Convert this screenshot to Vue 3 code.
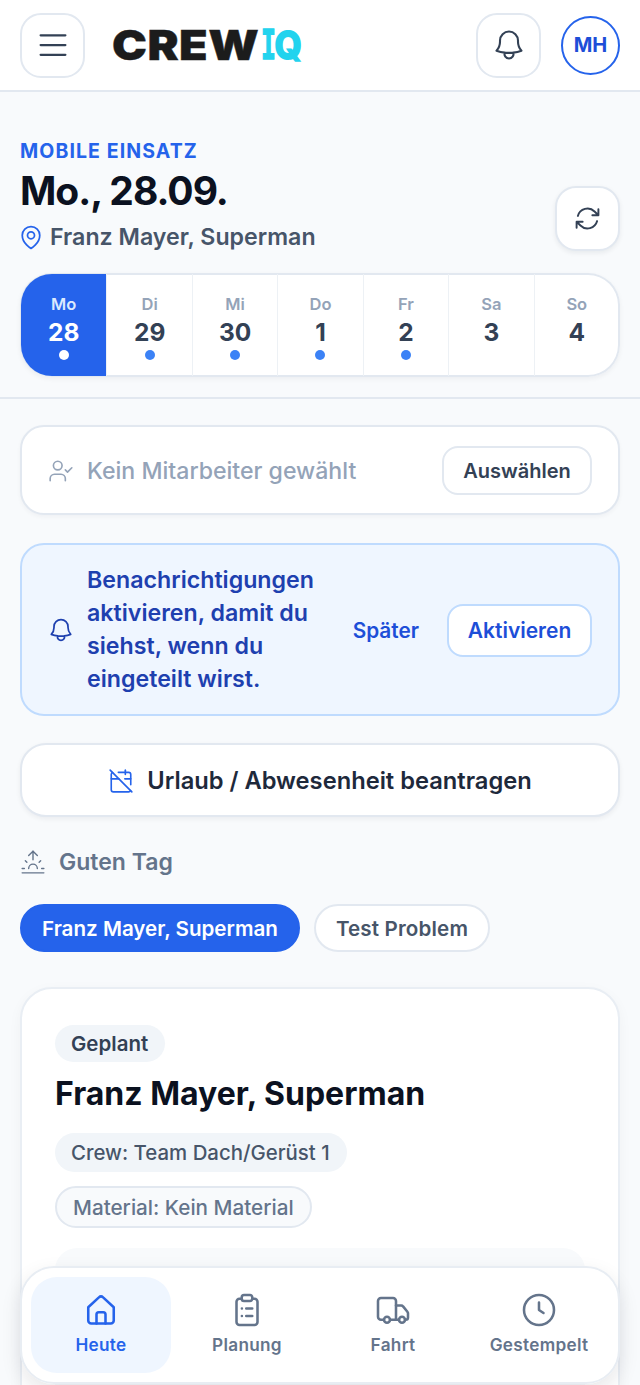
<template>
  <div class="page">
    <header class="topbar">
      <button class="icon-btn">
        <svg class="ico-menu" viewBox="0 0 24 24"><path d="M3.75 5.5h16.5M3.75 12h16.5M3.75 18.5h16.5" /></svg>
      </button>
      <div class="logo"><span class="logo-crew">CREW</span><span class="logo-i">I</span><span class="logo-q">Q</span></div>
      <button class="icon-btn bell-btn">
        <svg class="ico-lg" viewBox="0 0 24 24"><path d="M14.857 17.082a23.848 23.848 0 0 0 5.454-1.31A8.967 8.967 0 0 1 18 9.75V9A6 6 0 0 0 6 9v.75a8.967 8.967 0 0 1-2.312 6.022c1.733.64 3.56 1.085 5.455 1.31m5.714 0a24.255 24.255 0 0 1-5.714 0m5.714 0a3 3 0 1 1-5.714 0" /></svg>
      </button>
      <div class="avatar">MH</div>
    </header>

    <section class="hero">
      <div class="hero-head">
        <div>
          <div class="eyebrow">MOBILE EINSATZ</div>
          <h1 class="date">Mo., 28.09.</h1>
          <div class="place">
            <svg class="ico-pin" viewBox="0 0 24 24"><path d="M15 10.5a3 3 0 1 1-6 0 3 3 0 0 1 6 0Z" /><path d="M19.5 10.5c0 7.142-7.5 11.25-7.5 11.25S4.5 17.642 4.5 10.5a7.5 7.5 0 1 1 15 0Z" /></svg>
            Franz Mayer, Superman
          </div>
        </div>
        <button class="icon-btn refresh">
          <svg class="ico-md" viewBox="0 0 24 24"><path d="M16.023 9.348h4.992M2.985 19.644v-4.992m0 0h4.992m-4.993 0 3.181 3.183a8.25 8.25 0 0 0 13.803-3.7M4.031 9.865a8.25 8.25 0 0 1 13.803-3.7l3.181 3.182m0-4.991v4.99" /></svg>
        </button>
      </div>
      <div class="week">
        <div v-for="d in days" :key="d.label" class="day" :class="{ active: d.active }">
          <span class="day-label">{{ d.label }}</span>
          <span class="day-num">{{ d.num }}</span>
          <span class="dot" :class="{ hidden: !d.dot }"></span>
        </div>
      </div>
    </section>

    <main class="content">
      <div class="employee">
        <svg class="ico-user" viewBox="0 0 24 24"><path d="M16 21v-2a4 4 0 0 0-4-4H6a4 4 0 0 0-4 4v2" /><circle cx="9" cy="7" r="4" /><path d="m16 11 2 2 4-4" /></svg>
        <span class="employee-text">Kein Mitarbeiter gewählt</span>
        <button class="pick">Auswählen</button>
      </div>

      <div class="notice">
        <svg class="ico-notice" viewBox="0 0 24 24"><path d="M14.857 17.082a23.848 23.848 0 0 0 5.454-1.31A8.967 8.967 0 0 1 18 9.75V9A6 6 0 0 0 6 9v.75a8.967 8.967 0 0 1-2.312 6.022c1.733.64 3.56 1.085 5.455 1.31m5.714 0a24.255 24.255 0 0 1-5.714 0m5.714 0a3 3 0 1 1-5.714 0" /></svg>
        <p class="notice-text">Benachrichtigungen aktivieren, damit du siehst, wenn du eingeteilt wirst.</p>
        <span class="later">Später</span>
        <button class="activate">Aktivieren</button>
      </div>

      <button class="request">
        <svg class="ico-cal" viewBox="0 0 24 24"><path d="M4.2 4.2A2 2 0 0 0 3 6v14a2 2 0 0 0 2 2h14a2 2 0 0 0 1.82-1.18" /><path d="M21 15.5V6a2 2 0 0 0-2-2H9.5" /><path d="M16 2v4" /><path d="M3 10h7" /><path d="M21 10h-5.5" /><path d="m2 2 20 20" /></svg>
        Urlaub / Abwesenheit beantragen
      </button>

      <div class="greeting">
        <svg class="ico-sun" viewBox="0 0 24 24"><path d="M12 2v8" /><path d="m4.93 10.93 1.41 1.41" /><path d="M2 18h2" /><path d="M20 18h2" /><path d="m19.07 10.93-1.41 1.41" /><path d="M22 22H2" /><path d="m8 6 4-4 4 4" /><path d="M16 18a4 4 0 0 0-8 0" /></svg>
        Guten Tag
      </div>

      <div class="tabs">
        <span class="tab selected">Franz Mayer, Superman</span>
        <span class="tab">Test Problem</span>
      </div>

      <article class="job">
        <span class="badge">Geplant</span>
        <h2 class="job-title">Franz Mayer, Superman</h2>
        <span class="chip">Crew: Team Dach/Gerüst 1</span>
        <span class="chip outline">Material: Kein Material</span>
        <div class="job-inner"></div>
      </article>
    </main>

    <nav class="bottom-nav">
      <div v-for="n in nav" :key="n.label" class="nav-item" :class="{ current: n.current }">
        <svg class="ico-nav" viewBox="0 0 24 24"><path v-for="p in n.paths" :key="p" :d="p" /></svg>
        <span>{{ n.label }}</span>
      </div>
    </nav>
  </div>
</template>

<script setup>
const days = [
  { label: "Mo", num: 28, dot: true, active: true },
  { label: "Di", num: 29, dot: true },
  { label: "Mi", num: 30, dot: true },
  { label: "Do", num: 1, dot: true },
  { label: "Fr", num: 2, dot: true },
  { label: "Sa", num: 3, dot: false },
  { label: "So", num: 4, dot: false },
];

const nav = [
  {
    label: "Heute",
    current: true,
    paths: [
      "M3.5 10.2 10.6 3.6a2 2 0 0 1 2.8 0l7.1 6.6V19a2 2 0 0 1-2 2h-13a2 2 0 0 1-2-2Z",
      "M9 21v-6a1.5 1.5 0 0 1 1.5-1.5h3A1.5 1.5 0 0 1 15 15v6",
    ],
  },
  {
    label: "Planung",
    paths: [
      "M8.5 4.5H7a2 2 0 0 0-2 2V20a2 2 0 0 0 2 2h10a2 2 0 0 0 2-2V6.5a2 2 0 0 0-2-2h-1.5",
      "M10 2h4a1.5 1.5 0 0 1 1.5 1.5v1A1.5 1.5 0 0 1 14 6h-4a1.5 1.5 0 0 1-1.5-1.5v-1A1.5 1.5 0 0 1 10 2Z",
      "M8.6 11h.01M11.5 11h4M8.6 16h.01M11.5 16h4",
    ],
  },
  {
    label: "Fahrt",
    paths: [
      "M6 18.5H4a2 2 0 0 1-2-2V6a2 2 0 0 1 2-2h8a2 2 0 0 1 2 2v12.5H10",
      "M14 9h3.5a1.5 1.5 0 0 1 1.2.6l2.9 3.6a1.5 1.5 0 0 1 .4 1v2.8a1.5 1.5 0 0 1-1.5 1.5H20",
      "M14 18.5h2",
      "M10 18.5a2 2 0 1 1-4 0 2 2 0 0 1 4 0Z",
      "M20 18.5a2 2 0 1 1-4 0 2 2 0 0 1 4 0Z",
    ],
  },
  {
    label: "Gestempelt",
    paths: ["M12 7v5l3 2", "M22 12a10 10 0 1 1-20 0 10 10 0 0 1 20 0Z"],
  },
];
</script>

<style>
html, body { margin: 0; background: #f8fafc; }
</style>

<style scoped>
.page {
  position: relative;
  width: 640px;
  height: 1385px;
  overflow: hidden;
  background: #f8fafc;
  font-family: Inter, "Liberation Sans", sans-serif;
  color: #1e293b;
}

button {
  font-family: inherit;
  cursor: pointer;
}

svg {
  fill: none;
  stroke: currentColor;
  stroke-linecap: round;
  stroke-linejoin: round;
  flex: none;
}

.topbar {
  display: flex;
  align-items: center;
  height: 90px;
  padding: 0 20px;
  background: #fff;
  border-bottom: 2px solid #e2e8f0;
}

.icon-btn {
  display: flex;
  align-items: center;
  justify-content: center;
  width: 65px;
  height: 65px;
  padding: 0;
  background: #fff;
  border: 2px solid #e2e8f0;
  border-radius: 21px;
  color: #334155;
}

.ico-menu { width: 36px; height: 36px; stroke-width: 1.5; }
.ico-md { width: 29px; height: 29px; stroke-width: 1.6; }
.ico-lg { width: 36px; height: 36px; stroke-width: 1.4; color: #334155; }

.logo {
  display: flex;
  align-items: center;
  margin-left: 27px;
  line-height: 1;
}

.logo-crew {
  display: inline-block;
  width: 149px;
  color: #1c1c1c;
  font-size: 41px;
  font-weight: 900;
  letter-spacing: 0.4px;
  -webkit-text-stroke: 0.4px #1c1c1c;
  transform: scaleX(1.14);
  transform-origin: left center;
}

.logo-i {
  display: inline-block;
  width: 13px;
  color: #22d3ee;
  font-family: "DejaVu Sans Mono", monospace;
  font-size: 40px;
  font-weight: 700;
  -webkit-text-stroke: 1.4px #22d3ee;
  transform: scaleX(0.62);
  transform-origin: left center;
}

.logo-q {
  display: inline-block;
  width: 28px;
  color: #22d3ee;
  font-size: 41px;
  font-weight: 900;
  transform: scaleX(0.88);
  transform-origin: left center;
}

.bell-btn { margin-left: auto; }

.avatar {
  display: flex;
  align-items: center;
  justify-content: center;
  width: 59px;
  height: 59px;
  box-sizing: border-box;
  margin-left: 20px;
  border: 2px solid #2563eb;
  border-radius: 50%;
  background: #fff;
  color: #1d4ed8;
  font-size: 20px;
  font-weight: 700;
}

.hero {
  padding: 49px 20px 20px;
  border-bottom: 2px solid #e2e8f0;
}

.hero-head {
  display: flex;
  justify-content: space-between;
  align-items: flex-end;
}

.eyebrow {
  color: #2563eb;
  font-size: 19.5px;
  line-height: 21px;
  font-weight: 700;
  letter-spacing: 1.1px;
}

.date {
  margin: 8px 0 11px;
  color: #0b1120;
  font-size: 39px;
  line-height: 42px;
  font-weight: 700;
  letter-spacing: -1px;
}

.place {
  display: flex;
  align-items: center;
  gap: 5px;
  height: 28px;
  color: #475569;
  font-size: 23.2px;
  font-weight: 600;
}

.ico-pin {
  width: 28px;
  height: 28px;
  margin-left: -3px;
  stroke-width: 1.5;
  color: #2563eb;
}

.refresh {
  box-shadow: 0 2px 5px rgba(15, 23, 42, 0.07);
}

.week {
  display: grid;
  grid-template-columns: repeat(7, 1fr);
  height: 104px;
  box-sizing: border-box;
  margin-top: 22px;
  padding: 1px;
  overflow: hidden;
  background: #fff;
  border-radius: 32px;
  box-shadow: inset 0 0 0 2px #e2e8f0, 0 2px 5px rgba(15, 23, 42, 0.05);
}

.day {
  display: flex;
  flex-direction: column;
  align-items: center;
  padding-top: 20px;
  border-left: 1.5px solid #edf1f5;
}

.day:first-child { border-left: 0; }

.day-label {
  color: #94a3b8;
  font-size: 16.5px;
  line-height: 20px;
  font-weight: 600;
}

.day-num {
  margin-top: 3px;
  color: #334155;
  font-size: 24.5px;
  line-height: 30px;
  font-weight: 700;
}

.dot {
  width: 10px;
  height: 10px;
  margin-top: 3px;
  border-radius: 50%;
  background: #3b82f6;
}

.dot.hidden { visibility: hidden; }

.day.active {
  background: #2563eb;
  border-radius: 31px 0 0 31px;
}
.day.active .day-label { color: #dbeafe; }
.day.active .day-num { color: #fff; }
.day.active .dot { background: #fff; }

.content {
  display: flex;
  flex-direction: column;
  padding: 26px 20px 0;
}

.employee {
  display: flex;
  align-items: center;
  height: 90px;
  box-sizing: border-box;
  padding: 1px 26px 0;
  background: #fff;
  border: 2px solid #e2e8f0;
  border-radius: 24px;
  box-shadow: 0 2px 4px rgba(15, 23, 42, 0.04);
}

.ico-user { width: 26px; height: 26px; stroke-width: 1.5; color: #94a3b8; }

.employee-text {
  margin-left: 13px;
  color: #94a3b8;
  font-size: 23.1px;
  font-weight: 500;
}

.pick {
  margin-left: auto;
  height: 49px;
  width: 150px;
  background: #fff;
  border: 2px solid #e2e8f0;
  border-radius: 16px;
  color: #334155;
  font-size: 20px;
  font-weight: 600;
}

.notice {
  display: flex;
  align-items: center;
  height: 173px;
  box-sizing: border-box;
  margin-top: 28px;
  padding: 1px 26px 0;
  background: #eff6ff;
  border: 2px solid #bfdbfe;
  border-radius: 24px;
}

.ico-notice {
  width: 28px;
  height: 28px;
  margin-left: -1px;
  stroke-width: 1.5;
  color: #1e40af;
}

.notice-text {
  width: 245px;
  margin: 0 0 0 12px;
  color: #1e40af;
  font-size: 23.2px;
  line-height: 33px;
  font-weight: 600;
}

.later {
  margin-left: auto;
  color: #1d4ed8;
  font-size: 20.8px;
  font-weight: 600;
}

.activate {
  width: 145px;
  height: 53px;
  margin-left: 28px;
  background: #fff;
  border: 2px solid #bfdbfe;
  border-radius: 16px;
  color: #1d4ed8;
  font-size: 21px;
  font-weight: 600;
}

.request {
  display: flex;
  align-items: center;
  justify-content: center;
  gap: 13px;
  height: 74px;
  margin-top: 27px;
  padding-top: 2px;
  background: #fff;
  border: 2px solid #e2e8f0;
  border-radius: 26px;
  box-shadow: 0 2px 5px rgba(15, 23, 42, 0.06);
  color: #1e293b;
  font-size: 23.7px;
  font-weight: 600;
}

.ico-cal { width: 26px; height: 26px; stroke-width: 1.5; color: #2563eb; }

.greeting {
  display: flex;
  align-items: center;
  gap: 13px;
  height: 30px;
  margin-top: 30px;
  color: #64748b;
  font-size: 23px;
  font-weight: 600;
}

.ico-sun { width: 26px; height: 26px; stroke-width: 1.3; }

.tabs {
  display: flex;
  gap: 14px;
  margin-top: 27px;
}

.tab {
  display: flex;
  align-items: center;
  height: 48px;
  box-sizing: border-box;
  padding: 0 20px;
  background: #fff;
  border: 2px solid #e2e8f0;
  border-radius: 24px;
  color: #475569;
  font-size: 20.6px;
  letter-spacing: 0.15px;
  font-weight: 600;
}

.tab.selected {
  background: #2563eb;
  border-color: #2563eb;
  color: #fff;
  letter-spacing: 0;
}

.job {
  display: flex;
  flex-direction: column;
  align-items: flex-start;
  height: 600px;
  margin-top: 35px;
  box-sizing: border-box;
  padding: 36px 33px;
  background: #fff;
  border: 2px solid #e9eef4;
  border-radius: 32px;
  box-shadow: 0 4px 14px rgba(15, 23, 42, 0.04);
}

.badge {
  display: flex;
  align-items: center;
  height: 37px;
  padding: 0 17px 0 16px;
  background: #f1f5f9;
  border-radius: 19px;
  color: #334155;
  font-size: 20.5px;
  font-weight: 600;
}

.job-title {
  margin: 13px 0 0;
  color: #0b1120;
  font-size: 32px;
  line-height: 38px;
  font-weight: 700;
}

.chip {
  display: flex;
  align-items: center;
  height: 39px;
  margin-top: 20px;
  padding: 0 17px 0 16px;
  background: #f1f5f9;
  border-radius: 20px;
  color: #475569;
  font-size: 20.4px;
  font-weight: 500;
}

.chip.outline {
  height: 42px;
  margin-top: 14px;
  box-sizing: border-box;
  padding: 0 16px;
  background: #f8fafc;
  border: 2px solid #e2e8f0;
  border-radius: 21px;
  color: #64748b;
  font-size: 20.7px;
}

.job-inner {
  align-self: stretch;
  height: 200px;
  margin-top: 20px;
  background: #f8fafc;
  border-radius: 22px;
}

.bottom-nav {
  position: absolute;
  left: 20px;
  right: 20px;
  top: 1266px;
  height: 118px;
  box-sizing: border-box;
  display: grid;
  grid-template-columns: repeat(4, 1fr);
  gap: 6px;
  padding: 9px;
  background: rgba(255, 255, 255, 0.97);
  border: 2px solid #e8edf3;
  border-radius: 34px;
  box-shadow: 0 8px 20px rgba(15, 23, 42, 0.1);
}

.nav-item {
  display: flex;
  flex-direction: column;
  align-items: center;
  gap: 6px;
  padding-top: 15px;
  border-radius: 26px;
  color: #64748b;
  font-size: 17.2px;
  font-weight: 600;
  letter-spacing: 0.3px;
}

.nav-item.current {
  background: #eff6ff;
  color: #2563eb;
}

.ico-nav { width: 36px; height: 36px; stroke-width: 1.7; }
</style>
